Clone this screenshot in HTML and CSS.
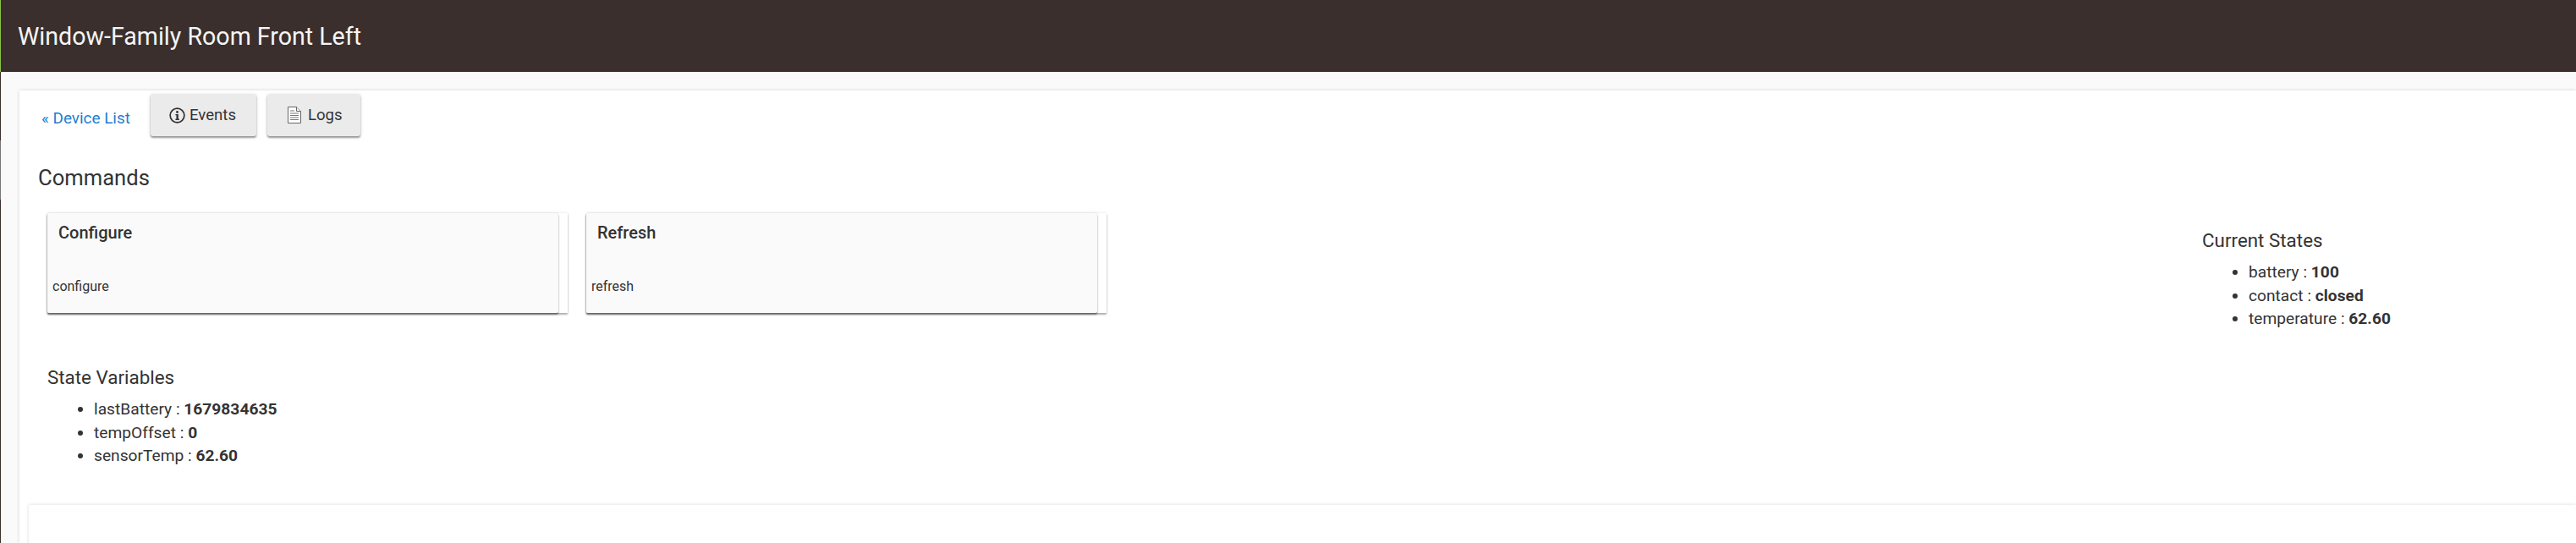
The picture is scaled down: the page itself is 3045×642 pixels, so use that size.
FILE: index.html
```html
<!DOCTYPE html>
<html lang="en">
<head>
    <meta charset="UTF-8">
    <title>Window-Family Room Front Left</title>
    <link rel="stylesheet" href="styles.css">
</head>
<body>
    <div class="edge">
        <div class="edge_green"></div>
        <div class="edge_dark"></div>
        <div class="edge_gray"></div>
        <div class="edge_dark edge_fill"></div>
    </div>
    <div class="page">
        <header class="top_bar">Window-Family Room Front Left</header>
        <main class="main">
            <section class="panel">
                <div class="nav_row">
                    <a class="back_link" href="#">« Device List</a>
                    <a class="btn btn_events" href="#">
                        <svg class="btn_icon" width="19" height="19" viewBox="0 0 20 20">
                            <circle cx="10" cy="10" r="8.800" fill="none" stroke="#333" stroke-width="1.800"/>
                            <circle cx="10" cy="5.800" r="1.500" fill="#333"/>
                            <path d="M7.800 8.300h3.600v6h1.100v1.400H7.800v-1.400h1.100V9.700H7.800z" fill="#333"/>
                        </svg>
                        Events
                    </a>
                    <a class="btn btn_logs" href="#">
                        <svg class="btn_icon" width="16" height="20" viewBox="0 0 16 20">
                            <path d="M.5.500h10l5 5v14H.5z" fill="#fff" stroke="#666"/>
                            <path d="M10.500.500v5h5" fill="#eee" stroke="#666"/>
                            <path d="M3 5h5M3 8h10M3 10.500h10M3 13h10M3 15.500h10" stroke="#777" stroke-width="1"/>
                        </svg>
                        Logs
                    </a>
                </div>
                <h2 class="commands_title">Commands</h2>
                <div class="info_row">
                    <div class="info_left">
                        <div class="cmd_row">
                            <div class="cmd">
                                <div class="cmd_card">
                                    <div class="cmd_name">Configure</div>
                                    <div class="cmd_id">configure</div>
                                </div>
                            </div>
                            <div class="cmd">
                                <div class="cmd_card">
                                    <div class="cmd_name">Refresh</div>
                                    <div class="cmd_id">refresh</div>
                                </div>
                            </div>
                        </div>
                        <div class="state_vars">
                            <h3 class="list_title">State Variables</h3>
                            <ul class="list">
                                <li>lastBattery : <b>1679834635</b></li>
                                <li>tempOffset : <b>0</b></li>
                                <li>sensorTemp : <b>62.60</b></li>
                            </ul>
                        </div>
                    </div>
                    <div class="current_states">
                        <h3 class="list_title">Current States</h3>
                        <ul class="list">
                            <li>battery : <b>100</b></li>
                            <li>contact : <b>closed</b></li>
                            <li>temperature : <b>62.60</b></li>
                        </ul>
                    </div>
                </div>
                <div class="lower_card"></div>
            </section>
        </main>
    </div>
</body>
</html>
```

FILE: styles.css
```css
html, body {
    margin: 0;
    height: 100%;
    overflow: hidden;
}
body {
    display: flex;
    background: #fafafa;
    color: #333;
    font-family: Roboto, "Liberation Sans", sans-serif;
}
.edge {
    width: 1px;
    height: 642px;
    flex: none;
    display: flex;
    flex-direction: column;
}
.edge_green {
    height: 85px;
    background: #8bc34a;
}
.edge_dark {
    height: 81px;
    background: #3a2f2c;
}
.edge_gray {
    height: 70px;
    background: #777;
}
.edge_fill {
    flex: 1;
}
.page {
    flex: 1;
    min-width: 0;
}
.top_bar {
    height: 85px;
    padding-left: 20px;
    background: #3a2f2c;
    color: #f5f5f5;
    font-size: 28.600px;
    line-height: 87px;
}
.main {
    padding: 22px 0 0 22px;
}
.panel {
    background: #fff;
    height: 535px;
    overflow: hidden;
    box-shadow: 0 0 4px rgba(0,0,0,.15);
}
.nav_row {
    display: flex;
    padding: 4px 0 0 26px;
}
.back_link {
    margin: 18px 49px 0 0;
    width: 80px;
    color: #1e7fd0;
    font-size: 18.900px;
    line-height: 22px;
    text-decoration: none;
    white-space: nowrap;
}
.btn {
    height: 50px;
    display: flex;
    align-items: center;
    background: #ebebeb;
    border-radius: 3px;
    color: #333;
    font-size: 18.600px;
    text-decoration: none;
    box-shadow: 0 2px 2px rgba(0,0,0,.35), 0 1px 4px rgba(0,0,0,.15);
}
.btn_events {
    width: 125px;
    margin-right: 13px;
    padding-left: 22px;
    gap: 5px;
    box-sizing: border-box;
}
.btn_logs {
    width: 110px;
    padding-left: 24px;
    gap: 8px;
    box-sizing: border-box;
}
.commands_title {
    margin: 34px 0 0 22px;
    font-size: 25.600px;
    line-height: 30px;
    font-weight: 400;
}
.info_row {
    display: flex;
    padding-top: 27px;
}
.info_left {
    width: 2580px;
    flex: none;
}
.cmd_row {
    display: flex;
    padding-left: 33px;
    gap: 22px;
}
.cmd {
    width: 615px;
    height: 118px;
    background: #fff;
    box-shadow: 0 2px 2px rgba(0,0,0,.3), 0 0 3px rgba(0,0,0,.12);
}
.cmd_card {
    width: 604px;
    height: 118px;
    background: #fafafa;
    border-radius: 2px;
    box-shadow: 0 2px 2px rgba(0,0,0,.4), 0 0 2px rgba(0,0,0,.15);
}
.cmd_name {
    padding: 11px 0 0 13px;
    font-size: 20px;
    font-weight: 500;
    line-height: 24px;
}
.cmd_id {
    padding: 42px 0 0 6px;
    font-size: 16px;
    line-height: 20px;
}
.state_vars {
    padding: 62px 0 0 33px;
}
.current_states {
    padding-top: 18px;
}
.list_title {
    margin: 0;
    font-size: 22.400px;
    font-weight: 400;
    line-height: 28px;
}
.list {
    margin: 10px 0 0;
    padding-left: 55px;
    font-size: 19.200px;
    line-height: 27.500px;
}
.list b {
    font-weight: 700;
}
.lower_card {
    margin: 44px 0 0 11px;
    height: 60px;
    background: #fff;
    box-shadow: 0 0 4px rgba(0,0,0,.15);
}
```
